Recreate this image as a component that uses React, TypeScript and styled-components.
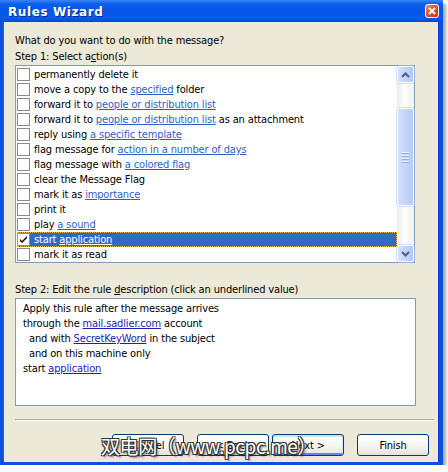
import React from 'react';
import styled, { createGlobalStyle, css } from 'styled-components';

const Global = createGlobalStyle`
  html, body { margin: 0; padding: 0; background: #ffffff; }
  body {
    font-family: "DejaVu Sans Condensed", "Liberation Sans", sans-serif;
    font-size: 11px;
    letter-spacing: -0.15px;
    color: #000;
  }
`;

const UI_FONT = `"DejaVu Sans Condensed", "Liberation Sans", sans-serif`;

const Window = styled.div`
  position: relative;
  width: 443px;
  height: 465px;
  display: flex;
  flex-direction: column;
  box-shadow: 3px 4px 3px rgba(0, 0, 0, 0.35);
`;

const TitleBar = styled.div`
  flex: none;
  height: 22px;
  box-sizing: border-box;
  display: flex;
  align-items: center;
  justify-content: space-between;
  padding: 0 4px 0 8px;
  background: linear-gradient(
    to bottom,
    #3a86f7 0%,
    #0b5eec 18%,
    #0657e8 50%,
    #0a5cee 80%,
    #0048d8 100%
  );
`;

const Title = styled.span`
  font-family: "DejaVu Sans", "Liberation Sans", sans-serif;
  font-weight: bold;
  font-size: 12px;
  letter-spacing: 0.6px;
  color: #ffffff;
  text-shadow: 1px 1px 0 #0a2a8a;
  padding-top: 1px;
`;

const CloseButton = styled.div`
  width: 14px;
  height: 14px;
  box-sizing: border-box;
  border: 1px solid #ffffff;
  border-radius: 3px;
  background: linear-gradient(135deg, #f08a6a 0%, #e0522c 45%, #c63a1c 100%);
  display: flex;
  align-items: center;
  justify-content: center;
`;

const Frame = styled.div`
  flex: 1;
  display: flex;
  flex-direction: column;
  align-items: flex-start;
  background: #ece9d8;
  border-left: 3px solid #0a4fe0;
  border-right: 4px solid #0a4fe0;
  border-bottom: 3px solid #0a4fe0;
  box-shadow: inset 1px 0 0 #1b5fe8, inset -1px 0 0 #0a3fc8;
  padding: 11px 10px 6px 12px;
`;

const Label = styled.div<{ $gap?: number }>`
  line-height: 16px;
  margin-top: ${p => p.$gap ?? 0}px;
  white-space: nowrap;
`;

const ListBox = styled.div`
  width: 400px;
  height: 198px;
  box-sizing: border-box;
  border: 1px solid #7f9db9;
  background: #ffffff;
  display: flex;
`;

const Rows = styled.div`
  flex: 1;
  padding: 1px 0 0 1px;
  display: flex;
  flex-direction: column;
`;

const Row = styled.div<{ $selected?: boolean }>`
  height: 15px;
  display: flex;
  align-items: center;
  white-space: pre;
  box-sizing: border-box;
  ${p =>
    p.$selected &&
    css`
      background: #316ac5;
      color: #ffffff;
      outline: 1px dotted #e2b84a;
      outline-offset: -1px;
    `}
`;

const Check = styled.span`
  flex: none;
  width: 13px;
  height: 13px;
  box-sizing: border-box;
  border: 1px solid #8a8a8a;
  background: #ffffff;
  margin-right: 4px;
  display: flex;
  align-items: center;
  justify-content: center;
`;

const ListLink = styled.span<{ $inverse?: boolean }>`
  color: ${p => (p.$inverse ? '#ffffff' : '#2e5fc6')};
  text-decoration: underline;
`;

const ScrollBar = styled.div`
  flex: none;
  width: 17px;
  display: flex;
  flex-direction: column;
  background: linear-gradient(to right, #eeede6 0%, #fcfcfa 45%, #f4f2ec 100%);
`;

const ScrollButton = styled.div`
  flex: none;
  height: 17px;
  box-sizing: border-box;
  border: 1px solid #ffffff;
  border-radius: 2px;
  background: linear-gradient(to right, #d6e2fd 0%, #c3d4fb 50%, #b4c8f6 100%);
  box-shadow: 0 0 0 0.5px #b0c4ee;
  display: flex;
  align-items: center;
  justify-content: center;
`;

const Track = styled.div`
  flex: 1;
  display: flex;
  flex-direction: column;
  padding-top: 25px;
`;

const Thumb = styled.div`
  height: 98px;
  box-sizing: border-box;
  border: 1px solid #ffffff;
  border-radius: 2px;
  background: linear-gradient(to right, #d2defd 0%, #c4d5fb 50%, #b6caf7 100%);
  box-shadow: 0 0 0 0.5px #a9bfee;
  display: flex;
  flex-direction: column;
  align-items: center;
  justify-content: center;
  gap: 1px;
`;

const Grip = styled.span`
  width: 7px;
  height: 1px;
  background: #eef4ff;
  box-shadow: 0 1px 0 #8cacf0;
  margin-bottom: 1px;
`;

const DescBox = styled.div`
  width: 401px;
  height: 108px;
  box-sizing: border-box;
  border: 1px solid #7f9db9;
  background: #ffffff;
  padding: 2px 7px;
`;

const DescLine = styled.div<{ $indent?: boolean }>`
  line-height: 15px;
  white-space: nowrap;
  padding-left: ${p => (p.$indent ? 6 : 0)}px;
`;

const DescLink = styled.span`
  color: #1b22b4;
  text-decoration: underline;
`;

const Separator = styled.div`
  margin-top: 13px;
  width: 419px;
  height: 1px;
  background: #aca899;
  border-bottom: 1px solid #ffffff;
`;

const ButtonRow = styled.div`
  margin-top: 13px;
  align-self: flex-end;
  display: flex;
  gap: 13px;
`;

const ButtonGroup = styled.div`
  display: flex;
  gap: 3px;
`;

const Button = styled.button<{ $default?: boolean }>`
  width: 72px;
  height: 22px;
  box-sizing: border-box;
  padding: 0;
  border: 1px solid #003c74;
  border-radius: 3px;
  background: linear-gradient(to bottom, #ffffff 0%, #f6f6f2 55%, #e4e2d8 100%);
  font-family: ${UI_FONT};
  font-size: 11px;
  letter-spacing: -0.15px;
  color: #000;
  ${p =>
    p.$default &&
    css`
      box-shadow: inset 0 1px 0 1px #cee7ff, inset 0 -1px 0 1px #6982ee;
    `}
`;

const Watermark = styled.div`
  position: absolute;
  left: 101px;
  top: 433px;
  font-family: "Noto Sans CJK SC", "Noto Sans", sans-serif;
  font-size: 19px;
  line-height: 26px;
  letter-spacing: -0.4px;
  color: #ffffff;
  white-space: nowrap;
  text-shadow: 1px 1px 0 #333, -1px -1px 0 #333, 1px -1px 0 #333, -1px 1px 0 #333,
    2px 2px 2px rgba(0, 0, 0, 0.5);
`;

type Part = string | { link: string };

const actions: Part[][] = [
  ['permanently delete it'],
  ['move a copy to the ', { link: 'specified' }, ' folder'],
  ['forward it to ', { link: 'people or distribution list' }],
  ['forward it to ', { link: 'people or distribution list' }, ' as an attachment'],
  ['reply using ', { link: 'a specific template' }],
  ['flag message for ', { link: 'action in a number of days' }],
  ['flag message with ', { link: 'a colored flag' }],
  ['clear the Message Flag'],
  ['mark it as ', { link: 'importance' }],
  ['print it'],
  ['play ', { link: 'a sound' }],
  ['start ', { link: 'application' }],
  ['mark it as read'],
];

const SELECTED = 11;

const CheckMark = () => (
  <svg width="9" height="9" viewBox="0 0 9 9">
    <path d="M1 4 L3 6 L8 1 L8 3 L3 8 L1 6 Z" fill="#000" />
  </svg>
);

const Chevron = ({ up }: { up?: boolean }) => (
  <svg width="9" height="6" viewBox="0 0 9 6">
    <path
      d={up ? 'M1 5 L4.5 1.5 L8 5' : 'M1 1 L4.5 4.5 L8 1'}
      stroke="#4d6185"
      strokeWidth="2"
      fill="none"
    />
  </svg>
);

export default function App() {
  return (
    <>
      <Global />
      <Window>
        <TitleBar>
          <Title>Rules Wizard</Title>
          <CloseButton>
            <svg width="8" height="8" viewBox="0 0 8 8">
              <path d="M1 1 L7 7 M7 1 L1 7" stroke="#fff" strokeWidth="2" />
            </svg>
          </CloseButton>
        </TitleBar>
        <Frame>
          <Label>What do you want to do with the message?</Label>
          <Label>
            Step 1: Select a<u>c</u>tion(s)
          </Label>
          <ListBox>
            <Rows>
              {actions.map((parts, i) => {
                const sel = i === SELECTED;
                return (
                  <Row key={i} $selected={sel}>
                    <Check>{sel && <CheckMark />}</Check>
                    {parts.map((p, j) =>
                      typeof p === 'string' ? (
                        <span key={j}>{p}</span>
                      ) : (
                        <ListLink key={j} $inverse={sel}>
                          {p.link}
                        </ListLink>
                      )
                    )}
                  </Row>
                );
              })}
            </Rows>
            <ScrollBar>
              <ScrollButton>
                <Chevron up />
              </ScrollButton>
              <Track>
                <Thumb>
                  <Grip />
                  <Grip />
                  <Grip />
                  <Grip />
                </Thumb>
              </Track>
              <ScrollButton>
                <Chevron />
              </ScrollButton>
            </ScrollBar>
          </ListBox>
          <Label $gap={19}>
            Step 2: Edit the rule <u>d</u>escription (click an underlined value)
          </Label>
          <DescBox>
            <DescLine>Apply this rule after the message arrives</DescLine>
            <DescLine>
              through the <DescLink>mail.sadlier.com</DescLink> account
            </DescLine>
            <DescLine $indent>
              and with <DescLink>SecretKeyWord</DescLink> in the subject
            </DescLine>
            <DescLine $indent>and on this machine only</DescLine>
            <DescLine>
              start <DescLink>application</DescLink>
            </DescLine>
          </DescBox>
          <Separator />
          <ButtonRow>
            <ButtonGroup>
              <Button>Cancel</Button>
            </ButtonGroup>
            <ButtonGroup>
              <Button>&lt; Back</Button>
              <Button $default>Next &gt;</Button>
            </ButtonGroup>
            <ButtonGroup>
              <Button>Finish</Button>
            </ButtonGroup>
          </ButtonRow>
        </Frame>
        <Watermark>双电网（www.pcpc.me）</Watermark>
      </Window>
    </>
  );
}
